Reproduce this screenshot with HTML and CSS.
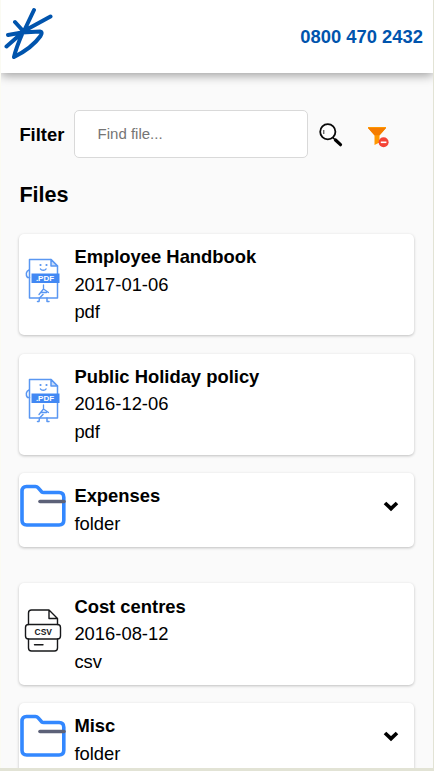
FILE: index.html
```html
<!DOCTYPE html>
<html lang="en">
<head>
<meta charset="utf-8">
<title>Files</title>
<link rel="stylesheet" href="styles.css">
</head>
<body>
<svg class="defs" aria-hidden="true">
  <symbol id="pdf" viewBox="0 0 46 46">
    <g fill="none" stroke="#5a97f2" stroke-width="1.5" stroke-linecap="round" stroke-linejoin="round">
      <path d="M9.500 1.500H31l6.500 6.500V40H9.500z"/>
      <path d="M31 1.500v6.500h6.500z" fill="#c8dcfa"/>
      <path d="M9 12c-3 1-3.500 5-1.500 7.500h2"/>
      <path d="M20.500 11c1 1.800 4.500 1.800 5.500 0"/>
      <path d="M23.500 27v4l-4.500 5.500M23.500 31l5 3.500M21.500 34.500h5" stroke-width="1.300"/>
      <path d="M23 36.500l-3.500 3.500-.5 3.500h-1.500M27 40v3.500h2"/>
    </g>
    <circle cx="20.500" cy="7" r="1.100" fill="#5593ef"/><circle cx="26.500" cy="7" r="1.100" fill="#5593ef"/>
    <path d="M11.500 15.500H39.500V25H11.500z" fill="#4288f3"/>
    <text x="25" y="23" class="pdf-label">.PDF</text>
  </symbol>
  <symbol id="csv" viewBox="0 0 46 46">
    <g fill="none" stroke="#17181a" stroke-width="1.400" stroke-linecap="round" stroke-linejoin="round">
      <path d="M8.500 16.500V5q0-3 3-3H29l8.500 8.500v6M8.500 31v9q0 3 3 3h23q3 0 3-3V31M29 2v8.500h8.500M14.500 36.800h8.500"/>
      <rect x="5.500" y="16.500" width="35" height="14.500" rx="3"/>
    </g>
    <text x="23.300" y="26.500" class="csv-label">CSV</text>
  </symbol>
  <symbol id="folder" viewBox="0 0 46 46">
    <path d="M6.500 2.500h9q1.500 0 2.500 1.200l3.600 4.100q.8.700 2 .700h15.500q4.700 0 4.700 4.700v23.100q0 4.700-4.700 4.700H6.700Q2 41 2 36.300V7.200q0-4.700 4.500-4.700z" fill="none" stroke="#3388ff" stroke-width="3.600"/>
    <path d="M20 17.500h24" stroke="#5c6178" stroke-width="3.600" stroke-linecap="round"/>
  </symbol>
  <symbol id="chevron" viewBox="0 0 18 12">
    <path d="M3 3l6 5.600L15 3" fill="none" stroke="#000" stroke-width="3.700"/>
  </symbol>
</svg>
<div class="frame">
  <header class="header">
    <svg class="logo" viewBox="0 0 50 52">
      <path d="M30 3L20 24M46.500 9.500L20 24M11 15L20 25M2.500 39.500L19 25M4 28L18 25.500L36 24.500Q39 25 36.500 29Q28 41 10 50Q12 41 19 25" fill="none" stroke="#0054ad" stroke-width="4" stroke-linecap="round" stroke-linejoin="round"/>
    </svg>
    <a class="phone">0800 470 2432</a>
  </header>
  <main class="content">
    <form class="filter">
      <label class="filter-label" for="find">Filter</label>
      <input class="field" id="find" placeholder="Find file...">
      <svg class="search" viewBox="0 0 24 24">
        <circle cx="8.800" cy="8.800" r="7.600" fill="#fff" stroke="#0a0a0a" stroke-width="1.800"/>
        <path d="M4.800 11V7" stroke="#333" stroke-width="1" fill="none"/>
        <path d="M13.800 14.500l2 2" stroke="#000" stroke-width="1.500"/>
        <path d="M16.500 17l5 4.700" stroke="#000" stroke-width="3.200" stroke-linecap="round"/>
      </svg>
      <svg class="clear" viewBox="0 0 22 22">
        <path d="M0 1h18v1l-6.500 7.500v7L6.500 19V9.500L0 2z" fill="#ff9800"/>
        <path d="M0 2h18l-6.500 7.300h-5z" fill="#f57c00"/>
        <circle cx="15.600" cy="16.300" r="5" fill="#f44336"/>
        <path d="M12.800 16.300h5.600" stroke="#fff" stroke-width="1.600"/>
      </svg>
    </form>
    <h1 class="title">Files</h1>
    <section class="list">
      <article class="card">
        <svg class="icon"><use href="#pdf"/></svg>
        <div class="info"><b>Employee Handbook</b><span>2017-01-06</span><span>pdf</span></div>
      </article>
      <article class="card">
        <svg class="icon"><use href="#pdf"/></svg>
        <div class="info"><b>Public Holiday policy</b><span>2016-12-06</span><span>pdf</span></div>
      </article>
      <article class="card folder">
        <svg class="icon"><use href="#folder"/></svg>
        <div class="info"><b>Expenses</b><span>folder</span></div>
        <svg class="chevron"><use href="#chevron"/></svg>
      </article>
      <article class="card">
        <svg class="icon"><use href="#csv"/></svg>
        <div class="info"><b>Cost centres</b><span>2016-08-12</span><span>csv</span></div>
      </article>
      <article class="card folder">
        <svg class="icon"><use href="#folder"/></svg>
        <div class="info"><b>Misc</b><span>folder</span></div>
        <svg class="chevron"><use href="#chevron"/></svg>
      </article>
    </section>
  </main>
</div>
</body>
</html>
```
FILE: styles.css
```css
* { box-sizing: border-box; }
body {
  margin: 0;
  height: 771px;
  overflow: hidden;
  background: #e2e3d5;
  color: #000;
  font: 18.4px/27.6px "Liberation Sans", Arial, sans-serif;
}
.defs { display: none; }
.frame {
  height: 768px;
  margin-right: 1px;
  overflow: hidden;
  background: #fafafa;
  border-left: 1px solid #fbfbf3;
}
.header {
  display: flex;
  justify-content: space-between;
  align-items: center;
  height: 73px;
  padding: 0 10px 0 3px;
  background: #fff;
  box-shadow: 0 2px 10px rgba(0, 0, 0, .4);
}
.logo { width: 50px; height: 52px; margin-top: -7px; }
.phone { color: #0054ad; font-weight: bold; }
.content { padding: 37px 18.4px 0; }
.filter { display: flex; align-items: center; height: 48px; }
.filter-label { width: 54.200px; padding-top: 1px; font-weight: bold; }
.field {
  width: 234.6px;
  height: 48px;
  padding: 0 23px 2px;
  border: 1px solid #d9d9d9;
  border-radius: 5px;
  background: #fff;
  font: 15px "Liberation Sans", Arial, sans-serif;
}
.field::placeholder { color: #757575; }
.search { width: 24px; height: 24px; margin: 2px 0 0 10.800px; }
.clear { width: 22px; height: 22px; margin: 5px 0 0 25.500px; }
.title { margin: 20px 0 23px; font-size: 21.6px; line-height: 33px; }
.list { display: flex; flex-direction: column; gap: 18.4px; }
.card {
  display: flex;
  align-items: center;
  width: 394.6px;
  padding: 9.2px 0;
  border-radius: 5px;
  background: #fff;
  box-shadow: 0 1px 3px rgba(0, 0, 0, .24);
}
.folder { margin-bottom: 18.4px; align-items: flex-start; }
.icon { width: 46px; height: 46px; margin: -7px 8.400px 0 .6px; }
.folder .icon { margin-top: 2px; }
.info { display: flex; flex: 1; flex-direction: column; }
.chevron { width: 18px; height: 12px; margin: 18px 14px 0 0; }
.pdf-label { font: bold 8px "Liberation Sans", sans-serif; fill: #fff; text-anchor: middle; }
.csv-label { font: bold 8.5px "Liberation Sans", sans-serif; fill: #17181a; text-anchor: middle; }
```
